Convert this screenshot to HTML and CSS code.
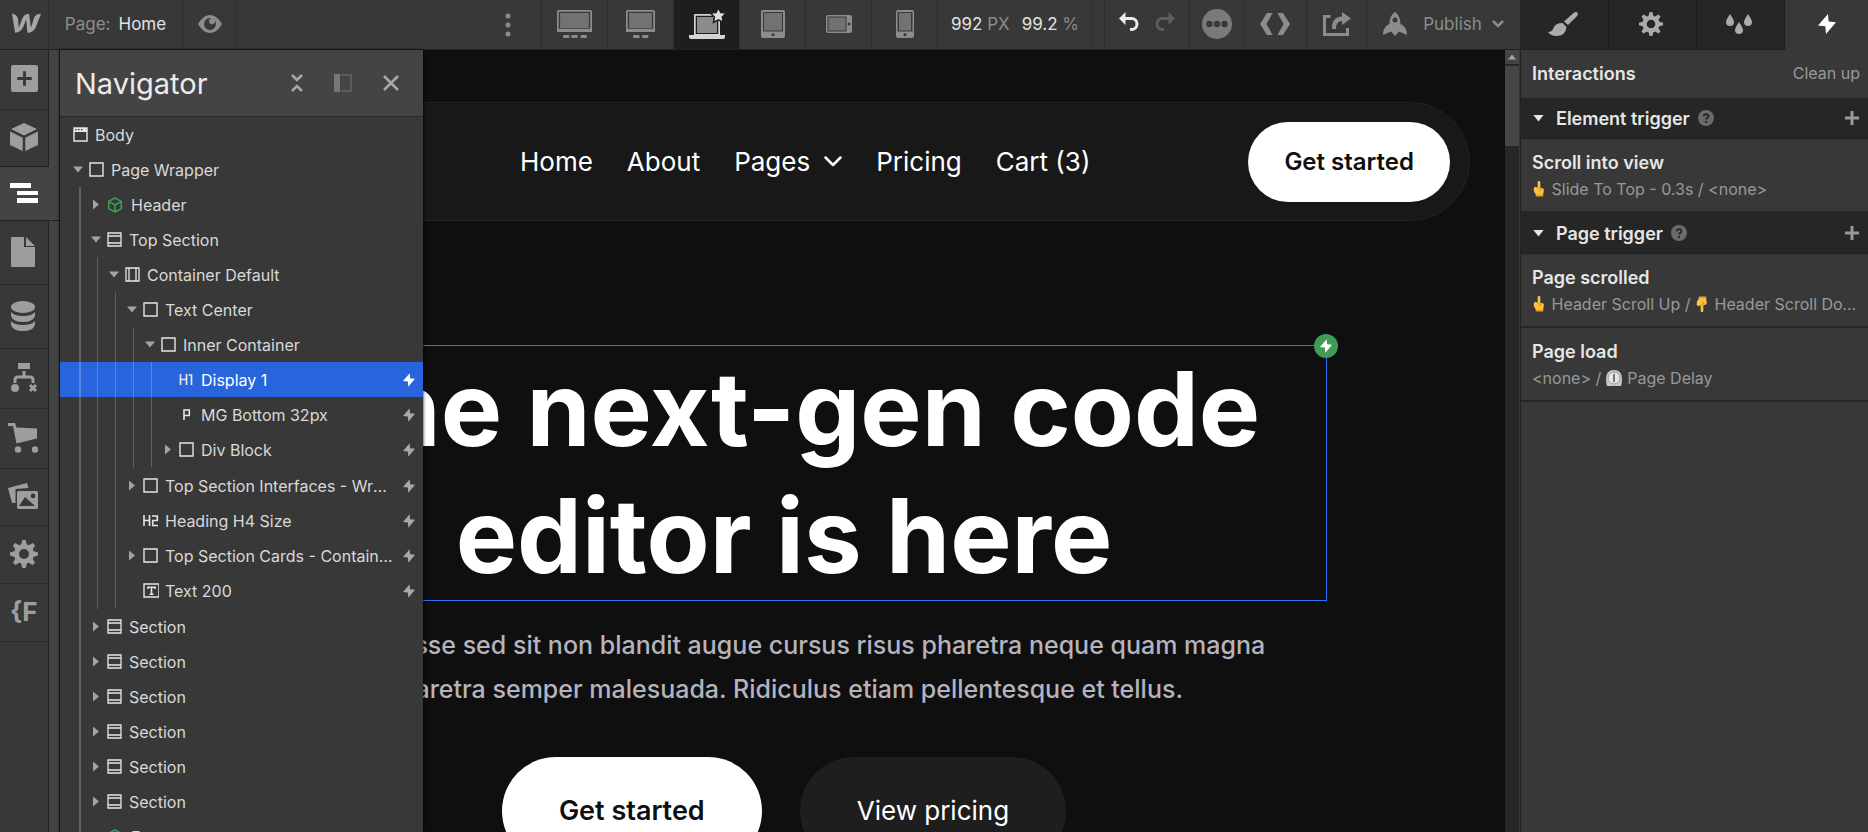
FILE: index.html
```html
<!DOCTYPE html>
<html lang="en">
<head>
  <meta charset="utf-8">
  <title>Designer</title>
  <link rel="stylesheet" href="styles.css">
</head>
<body>
  <!-- icons -->
  <svg class="sprite" width="0" height="0" aria-hidden="true">
    <symbol id="i-bolt" viewBox="0 0 18 20"><path d="M10 0 0 11.6l7.3.6L8 20 18 8.2l-7.4-.7z"/></symbol>
    <symbol id="i-gear" viewBox="0 0 28 28">
      <circle cx="14" cy="14" r="7.5" fill="none" stroke="currentColor" stroke-width="5"/>
      <g id="teeth"><path id="tooth" d="M12.4 0h3.2l1.4 5h-6z"/>
        <use href="#tooth" transform="rotate(45 14 14)"/><use href="#tooth" transform="rotate(90 14 14)"/>
        <use href="#tooth" transform="rotate(135 14 14)"/><use href="#tooth" transform="rotate(180 14 14)"/>
        <use href="#tooth" transform="rotate(225 14 14)"/><use href="#tooth" transform="rotate(270 14 14)"/>
        <use href="#tooth" transform="rotate(315 14 14)"/></g>
    </symbol>
    <symbol id="i-box" viewBox="0 0 16 16"><path d="M1 1h13v13H1z" fill="none" stroke="currentColor" stroke-width="1.4"/></symbol>
    <symbol id="i-section" viewBox="0 0 16 16"><path d="M1 1h13v13H1zM1 4h13M1 11h13" fill="none" stroke="currentColor" stroke-width="1.3"/></symbol>
    <symbol id="i-container" viewBox="0 0 16 16"><path d="M1 1h13v13H1zM4 1v13M11 1v13" fill="none" stroke="currentColor" stroke-width="1.3"/></symbol>
    <symbol id="i-body" viewBox="0 0 16 16"><path d="M1 1h13v13H1z" fill="none" stroke="currentColor" stroke-width="1.4"/><path d="M1 1h13v4H1z"/><path d="M2 2.6h1.5M5 2.6h1.5M8 2.6h1.5" stroke="#383838" stroke-width="1.2"/></symbol>
    <symbol id="i-symbol" viewBox="0 0 16 16"><path d="M8 1l6.3 3.4v7.2L8 15l-6.3-3.4V4.4zM1.7 4.6L8 8l6.3-3.4M8 8v7" fill="none" stroke="currentColor" stroke-width="1.6" stroke-linejoin="round"/></symbol>
    <symbol id="i-h1" viewBox="0 0 16 16"><path d="M1.500 2v11M7.500 2v11M1 7.500h6.500M9.500 3H12.500v10" fill="none" stroke="currentColor" stroke-width="1.700"/></symbol>
    <symbol id="i-h2" viewBox="0 0 16 16"><path d="M1 2v11M6.500 2v11M1 7.500h5.500M9 3h5.300v4.500H9.700v5H15" fill="none" stroke="currentColor" stroke-width="1.6"/></symbol>
    <symbol id="i-p" viewBox="0 0 16 16"><path d="M5 13V3h5.300v5.500H5" fill="none" stroke="currentColor" stroke-width="1.6"/></symbol>
    <symbol id="i-text" viewBox="0 0 16 16"><path d="M1 1h15v13H1z" fill="none" stroke="currentColor" stroke-width="1.4"/><path d="M5 6V4.300h7V6M8.500 4.300v7M6.500 11.300h4" fill="none" stroke="currentColor" stroke-width="1.6"/></symbol>
    <symbol id="i-up" viewBox="0 0 14 18"><path fill="#fbc23c" d="M5.500 1.500c0-2 3-2 3 0V8L11 8.200c1.500.3 1.500 1.200 1.300 3.300L11.500 16H4L1.200 11.500 1 8l2-1.500 2.500 1z"/><path d="M2.500 15.500h9.300v2H4z" fill="#f09a1e"/><path d="M6 8.500l3 1-1.500 2" fill="none" stroke="#d9861a"/></symbol>
    <symbol id="i-help" viewBox="0 0 16 16"><circle cx="8" cy="8" r="8" fill="#6b6b6b"/><path d="M5.700 6.300c0-3 4.700-2.800 4.700 0 0 1.600-2.300 1.500-2.300 3.200M8.100 11v2" fill="none" stroke="#262626" stroke-width="1.900"/></symbol>
    <symbol id="i-plus" viewBox="0 0 16 16"><path d="M8 1v14M1 8h14" stroke="currentColor" stroke-width="3"/></symbol>
  </svg>

  <div class="app">
    <div class="main">

      <!-- top bar -->
      <header class="topbar">
        <button class="tb logo" aria-label="Menu"><svg width="29" height="21" viewBox="0 3 24 17" preserveAspectRatio="none"><path d="M17.800 8.560s-1.950 6.100-2.100 6.600c-.06-.5-1.530-11.580-1.530-11.580-3.350 0-5.130 2.380-6.070 4.920 0 0-2.390 6.190-2.590 6.700 0-.47-.37-6.650-.37-6.650C4.940 5.420 2.100 3.580 0 3.580l2.530 15.360c3.870-.01 5.950-2.630 7.040-5.160 0 0 2.140-5.560 2.230-5.810.02.24.94 10.970.94 10.970 3.880 0 5.970-2.450 7.100-4.890L24 3.580c-3.830 0-5.850 2.450-6.200 4.980z"/></svg></button>
        <button class="tb page-name">Page: <b>Home</b></button>
        <button class="tb preview" aria-label="Preview"><svg width="24" height="18" viewBox="0 0 24 18"><path fill-rule="evenodd" d="M12 0c5 0 9 4 12 9-3 5-7 9-12 9S3 14 0 9c3-5 7-9 12-9zm0 3a6 6 0 1 0 6 6 6 6 0 0 0-1-3.300A3 3 0 1 1 13.500 3.200 6 6 0 0 0 12 3z"/></svg></button>
        <span class="spacer"></span>
        <button class="dots" aria-label="More breakpoints"><svg width="6" height="24" viewBox="0 0 6 24"><circle cx="3" cy="3" r="2.500"/><circle cx="3" cy="12" r="2.500"/><circle cx="3" cy="21" r="2.500"/></svg></button>
        <button class="tb device" aria-label="1920px"><svg width="35" height="28" viewBox="0 0 34 28" preserveAspectRatio="none"><path fill-rule="evenodd" d="M1.500 0h31q1.500 0 1.500 1.500V22H0V1.500Q0 0 1.500 0zM1.700 1.700v17h30.600v-17z"/><path opacity=".7" d="M3 3h28v15H3z"/><path d="M6 25h6v3H6zm8 0h6v3h-6zm9 0h6v3h-6z"/></svg></button>
        <button class="tb device" aria-label="Desktop"><svg width="29" height="28" viewBox="0 0 28 28" preserveAspectRatio="none"><path fill-rule="evenodd" d="M1.500 0h25q1.500 0 1.500 1.500V22H0V1.500Q0 0 1.500 0zM1.700 1.700v17h24.600v-17z"/><path opacity=".7" d="M3 3h22v15H3z"/><path d="M7 25h6v3H7zm8.500 0h6v3h-6z"/></svg></button>
        <button class="tb device active" aria-label="Laptop"><svg width="36" height="32" viewBox="0 0 36 32"><path fill="#d5d5d5" fill-rule="evenodd" d="M6 6h25v21h5v2q0 2-2 2H2q-2 0-2-2v-2h5V7q0-1 1-1zm.7 1.700V26h22.600V7.700z"/><path fill="#8c8c8c" d="M8 9h20v16H8z"/><path fill="#dedede" stroke="#1e1e1e" stroke-width="1.500" d="M29.500-.5l2.300 5 5.500.6-4 3.800 1 5.600-4.800-2.600-5 2.600.900-5.600-4-3.800 5.600-.6z"/></svg></button>
        <button class="tb device" aria-label="Tablet"><svg width="24" height="28" viewBox="0 0 24 28"><path fill-rule="evenodd" d="M2 0h20q2 0 2 2v24q0 2-2 2H2q-2 0-2-2V2Q0 0 2 0zm0 2v19.500h20V2z"/><path opacity=".7" d="M3 3h18v17.500H3z"/><circle cx="12" cy="24.700" r="1.500" fill="#383838"/></svg></button>
        <button class="tb device" aria-label="Mobile landscape"><svg width="26" height="18" viewBox="0 0 26 18"><path fill-rule="evenodd" d="M2 0h22q2 0 2 2v14q0 2-2 2H2q-2 0-2-2V2Q0 0 2 0zm-.5 1.500v15h19v-15z"/><path opacity=".7" d="M2.500 2.500h17v13h-17z"/><circle cx="23" cy="9" r="1.500" fill="#383838"/></svg></button>
        <button class="tb device" aria-label="Mobile portrait"><svg width="18" height="28" viewBox="0 0 18 28"><path fill-rule="evenodd" d="M2 0h14q2 0 2 2v24q0 2-2 2H2q-2 0-2-2V2Q0 0 2 0zm-.5 2v19.500h15V2z"/><path opacity=".7" d="M3 3h12v17.500H3z"/><circle cx="9" cy="24.700" r="1.500" fill="#383838"/></svg></button>
        <button class="tb canvas-size"><span><b>992</b> PX</span><span><b>99.2</b> %</span></button>
        <span class="tb gap"></span>
        <div class="tb history">
          <button aria-label="Undo" class="undo"><svg width="20" height="20" viewBox="0 0 20 20"><path d="M0 6.500L6.500 0v13z"/><path d="M5 6.500h7.500a5 5 0 0 1 0 11H11" fill="none" stroke="currentColor" stroke-width="3"/></svg></button>
          <button aria-label="Redo" class="redo"><svg width="20" height="20" viewBox="0 0 20 20"><path d="M20 6.500L13.500 0v13z"/><path d="M15 6.500H7.500a5 5 0 0 0 0 11H9" fill="none" stroke="currentColor" stroke-width="3"/></svg></button>
        </div>
        <button class="tb more" aria-label="More"><svg width="30" height="30" viewBox="0 0 30 30"><circle cx="15" cy="15" r="15"/><g fill="#383838"><circle cx="7.500" cy="15" r="3.200"/><circle cx="15" cy="15" r="3.200"/><circle cx="22.500" cy="15" r="3.200"/></g></svg></button>
        <button class="tb code" aria-label="Code"><svg width="30" height="22" viewBox="0 0 30 22"><path d="M7 0h5.500l-6 11 6 11H7L0 11zM23 0h-5.500l6 11-6 11H23l7-11z"/></svg></button>
        <button class="tb share" aria-label="Share"><svg width="28" height="24" viewBox="0 0 28 24"><path d="M7.500 4.500h-6v18h23V16" fill="none" stroke="currentColor" stroke-width="3"/><path d="M19 0l9 6.500-9 6.500V9q-6 0-6 8H9Q8.500 5 19 4.500z"/></svg></button>
        <button class="tb publish"><svg width="24" height="24" viewBox="0 0 24 24"><path fill-rule="evenodd" d="M12 0c3 2 5.500 6 5.500 12 4 2 6.500 5 6.500 11l-8-3.500-4 4.500-4-4.500L0 23c0-6 2.500-9 6.500-11C6.500 6 9 2 12 0zm0 5.500A2.500 2.500 0 1 0 12 10.500 2.500 2.500 0 0 0 12 5.500z"/></svg><span>Publish</span><svg width="12" height="8" viewBox="0 0 12 8"><path d="M1 1l5 5 5-5" fill="none" stroke="currentColor" stroke-width="2.500"/></svg></button>
      </header>

      <div class="workspace">
        <!-- left rail -->
        <nav class="rail">
          <button class="rail-btn rail-add" aria-label="Add"><svg width="27" height="27" viewBox="0 0 28 28"><path fill-rule="evenodd" d="M2 0h24q2 0 2 2v24q0 2-2 2H2q-2 0-2-2V2Q0 0 2 0zm10.500 6.500v6h-6v3h6v6h3v-6h6v-3h-6v-6z"/></svg></button>
          <button class="rail-btn rail-symbols" aria-label="Symbols"><svg width="28" height="28" viewBox="0 0 28 28"><path d="M14 0l13 6-13 6.500L1 6zM0 8.500l12.700 6.300V28L0 22zM28 8.500l-12.700 6.300V28L28 22z"/></svg></button>
          <button class="rail-btn rail-nav active" aria-label="Navigator"><svg width="28" height="20" viewBox="0 0 28 20"><path d="M0 0h21v5H0zM7 8h21v4H7zM7 15h21v5H7z"/></svg></button>
          <button class="rail-btn rail-pages" aria-label="Pages"><svg width="24" height="30" viewBox="0 0 24 30"><path d="M1 0h12v10h11v19q0 1-1 1H1q-1 0-1-1V1q0-1 1-1zM15 0l9 9h-9z"/></svg></button>
          <button class="rail-btn rail-cms" aria-label="CMS"><svg width="24" height="30" viewBox="0 0 24 30"><ellipse cx="12" cy="6" rx="12" ry="6"/><path d="M0 11q3 4 12 4t12-4v4q-2 6-12 6T0 15zM0 20q3 4 12 4t12-4v4q-2 6-12 6T0 24z"/></svg></button>
          <button class="rail-btn rail-logic" aria-label="Logic"><svg width="26" height="30" viewBox="0 0 26 30"><path d="M7 0h12v6H7z"/><path d="M13 8v5M4 20v-3q0-3 3-3h12q3 0 3 3v3" fill="none" stroke="currentColor" stroke-width="3"/><circle cx="4" cy="25" r="4"/><path d="M19 22l6 6m0-6l-6 6" stroke="currentColor" stroke-width="3"/></svg></button>
          <button class="rail-btn rail-shop" aria-label="Ecommerce"><svg width="30" height="30" viewBox="0 0 30 30"><path d="M0 0h7l1.500 4.500L29 5.500v10L8.500 20.500 5 3H0z"/><circle cx="10" cy="26.500" r="3.200"/><circle cx="27" cy="26.500" r="3.200"/></svg></button>
          <button class="rail-btn rail-assets" aria-label="Assets"><svg width="30" height="26" viewBox="0 0 30 26"><path d="M0 5L19 0l1.500 5L7.500 6v14H4z"/><path fill-rule="evenodd" d="M10.500 8H28.500q1.500 0 1.500 1.500v15q0 1.500-1.500 1.500H10.500Q9 26 9 24.500v-15Q9 8 10.500 8zM17 14l-6 9h16zm8-3.500a2.400 2.400 0 1 0 .1 0z"/></svg></button>
          <button class="rail-btn rail-settings" aria-label="Settings"><svg width="28" height="28"><use href="#i-gear"/></svg></button>
          <button class="rail-btn rail-apps" aria-label="Extension">{F</button>
        </nav>

        <!-- navigator -->
        <aside class="navigator">
          <div class="nav-head">
            <h1>Navigator</h1>
            <button aria-label="Collapse all"><svg width="12" height="18" viewBox="0 0 12 18"><path d="M1 1l5 5 5-5M1 17l5-5 5 5" fill="none" stroke="currentColor" stroke-width="2.500"/></svg></button>
            <button aria-label="Dock" class="dim"><svg width="18" height="18" viewBox="0 0 18 18"><path fill="#777" d="M0 0h6v18H0z"/><path d="M7 1h10v16H7" fill="none" stroke="currentColor" stroke-width="2"/></svg></button>
            <button aria-label="Close"><svg width="16" height="16" viewBox="0 0 16 16"><path d="M1 1l14 14M15 1L1 15" stroke="currentColor" stroke-width="2.500"/></svg></button>
          </div>
          <ul class="tree">
            <li><div class="row root"><svg class="ico"><use href="#i-body"/></svg><span>Body</span></div></li>
            <li>
              <div class="row"><i class="arrow open"></i><svg class="ico"><use href="#i-box"/></svg><span>Page Wrapper</span></div>
              <ul class="children wide">
                <li><div class="row symbol"><i class="arrow"></i><svg class="ico"><use href="#i-symbol"/></svg><span>Header</span></div></li>
                <li>
                  <div class="row"><i class="arrow open"></i><svg class="ico"><use href="#i-section"/></svg><span>Top Section</span></div>
                  <ul class="children">
                    <li>
                      <div class="row"><i class="arrow open"></i><svg class="ico"><use href="#i-container"/></svg><span>Container Default</span></div>
                      <ul class="children">
                        <li>
                          <div class="row"><i class="arrow open"></i><svg class="ico"><use href="#i-box"/></svg><span>Text Center</span></div>
                          <ul class="children">
                            <li>
                              <div class="row"><i class="arrow open"></i><svg class="ico"><use href="#i-box"/></svg><span>Inner Container</span></div>
                              <ul class="children">
                                <li><div class="row selected"><i class="arrow none"></i><svg class="ico"><use href="#i-h1"/></svg><span>Display 1</span><svg class="bolt"><use href="#i-bolt"/></svg></div></li>
                                <li><div class="row"><i class="arrow none"></i><svg class="ico"><use href="#i-p"/></svg><span>MG Bottom 32px</span><svg class="bolt"><use href="#i-bolt"/></svg></div></li>
                                <li><div class="row"><i class="arrow"></i><svg class="ico"><use href="#i-box"/></svg><span>Div Block</span><svg class="bolt"><use href="#i-bolt"/></svg></div></li>
                              </ul>
                            </li>
                          </ul>
                        </li>
                        <li><div class="row"><i class="arrow"></i><svg class="ico"><use href="#i-box"/></svg><span>Top Section Interfaces - Wrapper</span><svg class="bolt"><use href="#i-bolt"/></svg></div></li>
                        <li><div class="row"><i class="arrow none"></i><svg class="ico"><use href="#i-h2"/></svg><span>Heading H4 Size</span><svg class="bolt"><use href="#i-bolt"/></svg></div></li>
                        <li><div class="row"><i class="arrow"></i><svg class="ico"><use href="#i-box"/></svg><span>Top Section Cards - Container Default</span><svg class="bolt"><use href="#i-bolt"/></svg></div></li>
                        <li><div class="row"><i class="arrow none"></i><svg class="ico"><use href="#i-text"/></svg><span>Text 200</span><svg class="bolt"><use href="#i-bolt"/></svg></div></li>
                      </ul>
                    </li>
                  </ul>
                </li>
                <li><div class="row"><i class="arrow"></i><svg class="ico"><use href="#i-section"/></svg><span>Section</span></div></li>
                <li><div class="row"><i class="arrow"></i><svg class="ico"><use href="#i-section"/></svg><span>Section</span></div></li>
                <li><div class="row"><i class="arrow"></i><svg class="ico"><use href="#i-section"/></svg><span>Section</span></div></li>
                <li><div class="row"><i class="arrow"></i><svg class="ico"><use href="#i-section"/></svg><span>Section</span></div></li>
                <li><div class="row"><i class="arrow"></i><svg class="ico"><use href="#i-section"/></svg><span>Section</span></div></li>
                <li><div class="row"><i class="arrow"></i><svg class="ico"><use href="#i-section"/></svg><span>Section</span></div></li>
                <li><div class="row symbol"><i class="arrow"></i><svg class="ico"><use href="#i-symbol"/></svg><span>Footer</span></div></li>
              </ul>
            </li>
          </ul>
        </aside>

        <!-- canvas -->
        <main class="canvas">
          <div class="site-header">
            <div class="site-logo"></div>
            <nav class="site-nav">
              <a href="#">Home</a>
              <a href="#">About</a>
              <a href="#" class="with-arrow">Pages <svg width="18" height="11" viewBox="0 0 18 11"><path d="M1.500 1.500L9 9l7.500-7.500" fill="none" stroke="currentColor" stroke-width="2.500" stroke-linecap="round" stroke-linejoin="round"/></svg></a>
              <a href="#">Pricing</a>
              <a href="#">Cart (3)</a>
            </nav>
            <a href="#" class="btn btn-small">Get started</a>
          </div>
          <section class="hero">
            <h2>The next-gen code<br>editor is here<span class="badge"><svg width="12" height="14"><use href="#i-bolt"/></svg></span></h2>
            <p>Suspendisse sed sit non blandit augue cursus risus pharetra neque quam magna<br>pharetra semper malesuada. Ridiculus etiam pellentesque et tellus.</p>
            <div class="hero-buttons">
              <a href="#" class="btn">Get started</a>
              <a href="#" class="btn btn-dark">View pricing</a>
            </div>
          </section>
        </main>
        <div class="scrollbar">
          <div class="scroll-up"></div>
          <div class="scroll-thumb"></div>
        </div>
      </div>
    </div>

    <!-- right panel -->
    <aside class="panel">
      <div class="tabs">
        <button aria-label="Style"><svg width="30" height="24" viewBox="0 0 30 24"><path d="M28.500 0q2 1 1 3.500L20 13l-4-3.500L25.500 1q1.500-1.500 3-1zM14.500 11l4 4q-1 9-10 9-6 0-8.500-4 4 0 5.500-4 2-5 9-5z"/></svg></button>
        <button aria-label="Settings"><svg width="24" height="24"><use href="#i-gear"/></svg></button>
        <button aria-label="Style manager"><svg width="26" height="20" viewBox="0 0 26 20"><path d="M4 0q4 6 4 8a4 4 0 0 1-8 0q0-2 4-8zM22 0q4 6 4 8a4 4 0 0 1-8 0q0-2 4-8zM13 8q4 6 4 8a4 4 0 0 1-8 0q0-2 4-8z"/></svg></button>
        <button aria-label="Interactions" class="active"><svg width="18" height="20"><use href="#i-bolt"/></svg></button>
      </div>
      <div class="panel-title"><h2>Interactions</h2><button>Clean up</button></div>

      <div class="group-head"><i class="caret"></i><h3>Element trigger</h3><svg width="16" height="16"><use href="#i-help"/></svg><button aria-label="Add element trigger"><svg width="16" height="16"><use href="#i-plus"/></svg></button></div>
      <div class="trigger">
        <h4>Scroll into view</h4>
        <p><svg class="emoji" width="14" height="16"><use href="#i-up"/></svg> Slide To Top - 0.3s / &lt;none&gt;</p>
      </div>

      <div class="group-head"><i class="caret"></i><h3>Page trigger</h3><svg width="16" height="16"><use href="#i-help"/></svg><button aria-label="Add page trigger"><svg width="16" height="16"><use href="#i-plus"/></svg></button></div>
      <div class="trigger">
        <h4>Page scrolled</h4>
        <p><svg class="emoji" width="14" height="16"><use href="#i-up"/></svg> Header Scroll Up / <svg class="emoji down" width="14" height="16"><use href="#i-up"/></svg> Header Scroll Down</p>
      </div>
      <div class="trigger">
        <h4>Page load</h4>
        <p>&lt;none&gt; / <svg class="emoji" width="16" height="16" viewBox="0 0 16 16"><path fill="#c9c9c9" d="M1 16q-1-3-1-7 0-9 8-9t8 9q0 4-1 7z"/><circle cx="8" cy="8" r="6" fill="#e6e6e6" stroke="#9b9b9b"/><path d="M8 4v8" stroke="#777" stroke-width="2"/></svg> Page Delay</p>
      </div>
    </aside>
  </div>
</body>
</html>
```

FILE: styles.css
```css
* {
  box-sizing: border-box;
}

body {
  margin: 0;
  background: #383838;
  color: #d9d9d9;
  font-family: Inter, "Liberation Sans", sans-serif;
  font-size: 16px;
  overflow: hidden;
}

button {
  padding: 0;
  border: 0;
  background: none;
  color: inherit;
  font: inherit;
}

a {
  color: inherit;
  text-decoration: none;
}

h1, h2, h3, h4, p, ul {
  margin: 0;
  padding: 0;
}

li {
  list-style: none;
}

svg {
  fill: currentColor;
  flex: none;
  overflow: visible;
}

.sprite {
  position: absolute;
}

.app {
  display: flex;
  height: 100vh;
}

.main {
  display: flex;
  flex: 1;
  flex-direction: column;
  min-width: 0;
}

/* top bar */
.topbar {
  display: flex;
  height: 50px;
  border-bottom: 1px solid #222;
  color: #8c8c8c;
  font-size: 17px;
}

.tb {
  display: flex;
  align-items: center;
  justify-content: center;
  padding-bottom: 2px;
  border-left: 1px solid #2d2d2d;
}

.tb b {
  color: #e2e2e2;
  font-weight: 400;
}

.logo {
  width: 48px;
  padding-left: 4px;
  border: 0;
  color: #a6a6a6;
}

.page-name {
  gap: 8px;
  width: 134px;
}

.preview {
  width: 55px;
  border-right: 1px solid #2d2d2d;
}

.spacer {
  flex: 1;
}

.dots {
  display: flex;
  align-items: center;
  justify-content: center;
  width: 66px;
}

.device {
  width: 66px;
}

.device.active {
  background: #1e1e1e;
}

.canvas-size {
  gap: 12px;
  width: 155px;
}

.canvas-size span {
  white-space: nowrap;
}

.gap {
  width: 12px;
}

.history {
  gap: 16px;
  width: 85px;
}

.undo {
  color: #ebebeb;
}

.redo {
  color: #5e5e5e;
}

.more {
  width: 54px;
  color: #7a7a7a;
}

.code {
  width: 63px;
}

.share {
  width: 60px;
}

.publish {
  gap: 10px;
  width: 154px;
}

.publish span {
  margin-left: 6px;
}

/* left rail */
.workspace {
  position: relative;
  display: flex;
  flex: 1;
  min-height: 0;
}

.rail {
  display: flex;
  flex-direction: column;
  flex: none;
  width: 60px;
  padding-right: 11px;
  border-right: 1px solid #222;
  background: linear-gradient(90deg, #383838 48px, #222 48px, #222 49px, #444 49px);
  color: #9e9e9e;
}

.rail-btn {
  display: flex;
  align-items: center;
  flex: none;
  width: 48px;
  height: 58px;
  padding: 0 0 2px 10px;
  border-bottom: 1px solid #2b2b2b;
}

.rail-btn.active {
  width: 59px;
  height: 54px;
  background: #444;
  color: #fff;
  border-color: #222;
}

.rail-symbols {
  border-color: #222;
}

.rail-symbols,
.rail-assets {
  height: 57px;
}

.rail-add,
.rail-logic,
.rail-shop {
  height: 60px;
}

.rail-pages,
.rail-cms {
  height: 64px;
}

.rail-add,
.rail-pages,
.rail-cms,
.rail-logic {
  padding-left: 11px;
}

.rail-shop,
.rail-assets {
  padding-left: 8px;
}

.rail-apps {
  font-size: 26px;
  font-weight: 700;
}

/* navigator */
.navigator {
  position: absolute;
  top: 0;
  bottom: 0;
  left: 60px;
  z-index: 2;
  width: 363px;
  overflow: hidden;
  background: #383838;
  box-shadow: 0 0 3px #000;
}

.nav-head {
  display: flex;
  align-items: center;
  height: 67px;
  padding: 0 24px 0 15px;
  border-bottom: 1px solid #2b2b2b;
  background: #444;
  color: #a8a8a8;
}

.nav-head h1 {
  flex: 1;
  color: #ebebeb;
  font-size: 29px;
  font-weight: 400;
}

.nav-head button {
  display: flex;
  margin-left: 31px;
}

.nav-head .dim {
  color: #5c5c5c;
}

.tree {
  isolation: isolate;
  padding-left: 13px;
}

.children {
  margin-left: 6px;
  padding-left: 11px;
  border-left: 1px solid rgba(255, 255, 255, 0.2);
}

.children.wide {
  padding-left: 10px;
  border-left-width: 2px;
}

.tree li:not(:last-child) > .children {
  padding-bottom: 1px;
}

.row {
  position: relative;
  display: flex;
  align-items: center;
  gap: 6px;
  height: 35px;
  padding-right: 8px;
}

.row span {
  flex: 1;
  overflow: hidden;
  text-overflow: ellipsis;
  white-space: nowrap;
}

.row.symbol span {
  padding-left: 2px;
}

.row.selected {
  color: #fff;
}

/* the highlight runs under the guides up to the panel edge */
.row.selected::before {
  content: "";
  position: absolute;
  inset: 0 0 0 -200px;
  z-index: -1;
  background: #2865dc;
}

.ico {
  width: 16px;
  height: 16px;
  color: #e6e6e6;
}

.symbol .ico {
  color: #3f9c55;
}

.bolt {
  width: 12px;
  height: 14px;
  margin-left: 3px;
  color: #a8a8a8;
}

.selected .bolt {
  color: #fff;
}

.arrow {
  width: 10px;
  height: 10px;
  background: #a3a3a3;
  clip-path: polygon(20% 0, 80% 50%, 20% 100%);
}

.arrow.open {
  clip-path: polygon(0 20%, 100% 20%, 50% 80%);
}

.arrow.none {
  visibility: hidden;
}

/* canvas */
.canvas {
  flex: 1;
  min-width: 0;
  padding: 52px 35px 0 38px;
  overflow: hidden;
  background: #0f0f0f;
  color: #fff;
}

.site-header {
  display: flex;
  align-items: center;
  justify-content: space-between;
  height: 119px;
  padding: 0 19px;
  border: 1px solid #222;
  border-radius: 60px;
  background: #181818;
}

.site-logo {
  width: 244px;
}

.site-nav {
  display: flex;
  gap: 34px;
  font-size: 26px;
}

.with-arrow {
  display: flex;
  align-items: center;
  gap: 14px;
}

.btn {
  padding: 36px 57px;
  border-radius: 60px;
  background: #fff;
  color: #0f0f0f;
  font-size: 27px;
  font-weight: 600;
  line-height: 36px;
}

.btn-small {
  padding: 22px 36px;
  font-size: 24px;
}

.btn-dark {
  background: #1e1e1e;
  color: #fff;
  font-size: 26px;
  font-weight: 400;
}

.hero {
  display: flex;
  flex-direction: column;
  align-items: center;
  margin-top: 124px;
  text-align: center;
}

.hero h2 {
  position: relative;
  width: 1086px;
  padding-bottom: 2px;
  outline: 1px solid #2b73f0;
  outline-offset: -1px;
  font-size: 103px;
  font-weight: 700;
  line-height: 127px;
}

.badge {
  position: absolute;
  top: -11px;
  right: -11px;
  display: grid;
  place-items: center;
  width: 24px;
  height: 24px;
  border-radius: 50%;
  background: #3f9c55;
}

.hero p {
  margin-top: 22px;
  color: #b5b3be;
  font-size: 25px;
  font-weight: 500;
  line-height: 44px;
  white-space: nowrap;
}

.hero-buttons {
  display: flex;
  gap: 38px;
  margin-top: 46px;
}

.scrollbar {
  flex: none;
  width: 14px;
  margin-right: 1px;
  background: #272727;
}

.scroll-up {
  display: grid;
  place-items: center;
  height: 15px;
  border-bottom: 1px solid #222;
  background: #444;
}

.scroll-up::before {
  content: "";
  width: 8px;
  height: 5px;
  background: #a3a3a3;
  clip-path: polygon(50% 0, 100% 100%, 0 100%);
}

.scroll-thumb {
  height: 80px;
  margin-top: 1px;
  background: #464646;
}

/* right panel */
.panel {
  flex: none;
  width: 348px;
  border-left: 1px solid #222;
}

.tabs {
  display: grid;
  grid-template-columns: repeat(3, 88px) 1fr;
  height: 50px;
}

.tabs button {
  display: grid;
  place-items: center;
  padding: 0 3px 2px 0;
  border-right: 1px solid #1e1e1e;
  border-bottom: 1px solid #1e1e1e;
  background: #262626;
  color: #ababab;
}

.tabs .active {
  padding-right: 0;
  border: 0;
  background: none;
  color: #fff;
}

.panel-title {
  display: flex;
  align-items: center;
  justify-content: space-between;
  height: 48px;
  padding: 0 8px 2px 11px;
  color: #999;
}

.panel h2,
.panel h3,
.panel h4 {
  color: #e6e6e6;
  font-size: 18px;
  font-weight: 600;
}

.group-head {
  display: flex;
  align-items: center;
  gap: 8px;
  height: 41px;
  padding: 0 8px 0 12px;
  border-bottom: 1px solid #1e1e1e;
  background: #262626;
}

.group-head button {
  display: flex;
  margin-left: auto;
  color: #999;
}

.caret {
  width: 11px;
  height: 7px;
  margin-right: 4px;
  background: #e6e6e6;
  clip-path: polygon(0 0, 100% 0, 50% 100%);
}

.trigger {
  height: 74px;
  padding: 11px 8px 0 11px;
  border-bottom: 2px solid #262626;
}

.trigger h4 {
  line-height: 26px;
}

.trigger p {
  overflow: hidden;
  color: #999;
  line-height: 26px;
  text-overflow: ellipsis;
  white-space: nowrap;
}

.emoji {
  margin-right: 1px;
  vertical-align: -2px;
}

.emoji.down {
  transform: scaleY(-1);
}
```
